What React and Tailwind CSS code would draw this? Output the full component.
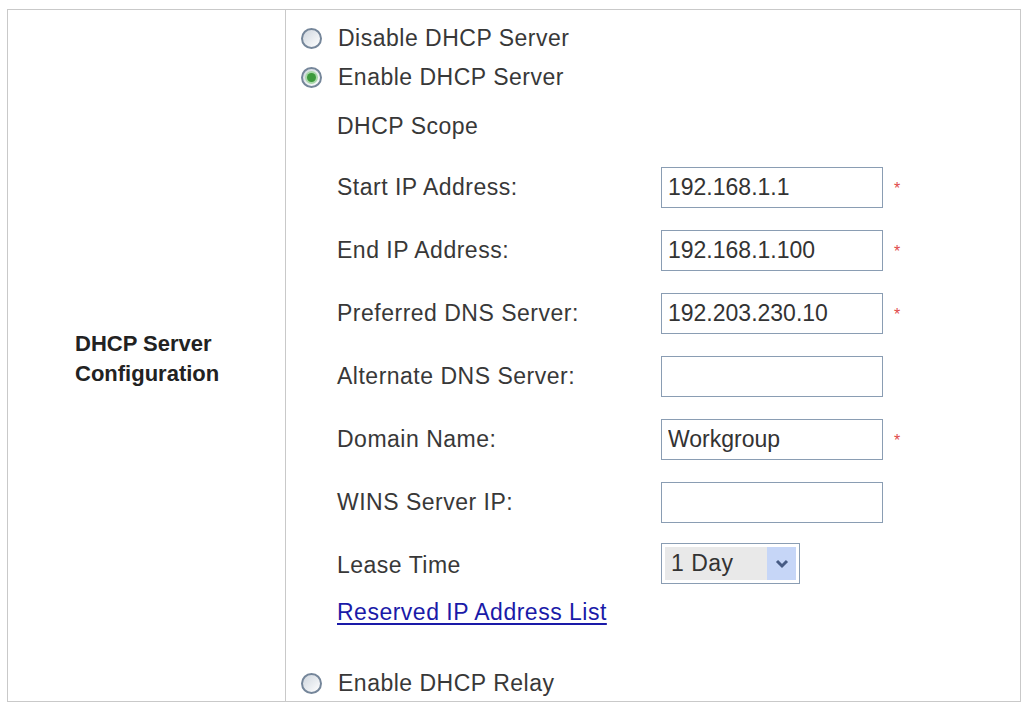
import React from 'react';

const Circle = ({ checked }) => (
  <span className="w-[21px] h-[21px] rounded-full border-2 border-[#75869a] bg-gradient-to-br from-[#cfd6de] to-[#ffffff] flex items-center justify-center shrink-0">
    {checked && <span className="w-[9px] h-[9px] rounded-full bg-[#3d9a3d] ring-2 ring-[#a9d8a9]" />}
  </span>
);

const Radio = ({ checked, label }) => (
  <div className="flex items-center h-[39px] pl-[15px]">
    <Circle checked={checked} />
    <span className="ml-[16px]">{label}</span>
  </div>
);

const FieldRow = ({ label, value, required }) => (
  <div className="flex items-center h-[63px] pl-[51px]">
    <span className="w-[324px] shrink-0">{label}</span>
    <input
      type="text"
      readOnly
      value={value}
      className="w-[222px] h-[41px] border border-[#8a9db3] bg-white pl-[6px] text-[23px] text-[#333] tracking-normal outline-none"
    />
    {required && <span className="ml-[11px] text-[#e04a4a] text-[16px] leading-none mt-[2px]">*</span>}
  </div>
);

const fields = [
  { label: 'Start IP Address:', value: '192.168.1.1', required: true },
  { label: 'End IP Address:', value: '192.168.1.100', required: true },
  { label: 'Preferred DNS Server:', value: '192.203.230.10', required: true },
  { label: 'Alternate DNS Server:', value: '', required: false },
  { label: 'Domain Name:', value: 'Workgroup', required: true },
  { label: 'WINS Server IP:', value: '', required: false },
];

const App = () => {
  return (
    <div className="min-h-screen bg-white pt-[9px] pl-[7px]" style={{ fontFamily: '"Liberation Sans", Arial, sans-serif' }}>
      <div className="w-[1014px] border border-[#c9c9c9] flex text-[23px] text-[#383838] tracking-[0.5px]">
        {/* Section title */}
        <div className="w-[278px] shrink-0 border-r border-[#c9c9c9] flex items-center pl-[67px] pt-[6px]">
          <p className="font-bold text-[22px] leading-[30px] text-[#222] tracking-normal">
            DHCP Server<br />Configuration
          </p>
        </div>

        {/* Options */}
        <div className="flex-1 pt-[9px]">
          <Radio label="Disable DHCP Server" />
          <Radio checked label="Enable DHCP Server" />
          <div className="h-[38px] mt-[10px] flex items-center pl-[51px]">DHCP Scope</div>
          <div className="mt-[11px]">
            {fields.map(f => (
              <FieldRow key={f.label} {...f} />
            ))}
            <div className="flex items-center h-[63px] pl-[51px]">
              <span className="w-[324px] shrink-0">Lease Time</span>
              <div className="w-[139px] h-[41px] border border-[#8a9db3] bg-white p-[3px] flex mt-[-4px]">
                <div className="flex-1 bg-[#e9e9e9] flex items-center pl-[6px] text-[#333]">1 Day</div>
                <div className="w-[29px] bg-[#c6d6f7] flex items-center justify-center">
                  <svg width="14" height="10" viewBox="0 0 14 10">
                    <path d="M2 2 L7 7 L12 2" fill="none" stroke="#465b84" strokeWidth="3" />
                  </svg>
                </div>
              </div>
            </div>
          </div>
          <div className="h-[30px] flex items-center pl-[51px]">
            <a href="#" className="text-[#1a1aa8] underline underline-offset-[3px]">Reserved IP Address List</a>
          </div>
          <div className="mt-[38px] h-[36px] flex items-center pl-[15px]">
            <Circle />
            <span className="ml-[16px]">Enable DHCP Relay</span>
          </div>
        </div>
      </div>
    </div>
  );
};

export default App;
